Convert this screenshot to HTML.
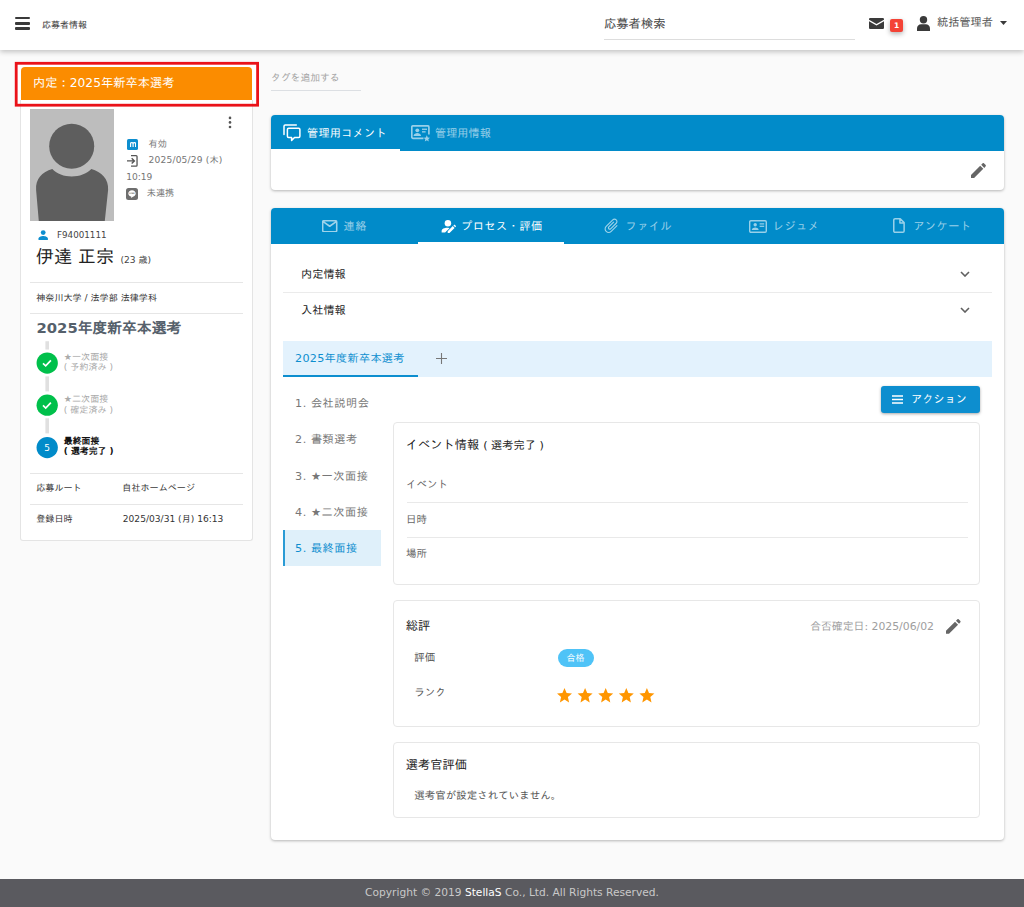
<!DOCTYPE html>
<html lang="ja">
<head>
<meta charset="utf-8">
<title>応募者情報</title>
<style>
*{box-sizing:border-box;margin:0;padding:0}
html,body{width:1024px;height:907px;overflow:hidden}
body{background:#fafafa;font-family:"DejaVu Sans","Liberation Sans","IPAGothic","Noto Sans CJK JP",sans-serif;color:#333;position:relative;font-size:11px}
.abs{position:absolute}
/* header */
#hdr{position:absolute;left:0;top:0;width:1024px;height:50px;background:#fff;box-shadow:0 2px 5px rgba(0,0,0,.22);z-index:5}
#hdr .ham{position:absolute;left:15px;top:17px;width:15px;height:13px}
#hdr .ham i{position:absolute;left:0;width:15px;height:2.4px;background:#3a3a3a;border-radius:1px}
#hdr .ttl{position:absolute;left:42px;top:18px;font-size:9px;line-height:14px;color:#333}
#hdr .srch{position:absolute;left:604px;top:15px;width:251px;height:25px;border-bottom:1px solid #ddd;font-size:12.3px;line-height:18px;color:#444}
#hdr .uname{position:absolute;left:937px;top:14px;font-size:11.2px;line-height:18px;color:#505050}
#hdr .badge{position:absolute;left:890px;top:19px;width:13px;height:13px;background:#f44336;border-radius:2px;color:#fff;font-size:7.5px;font-weight:bold;line-height:13px;text-align:center;box-shadow:0 2px 5px rgba(0,0,0,.3)}
/* left */
#redbox{position:absolute;left:14px;top:61px;width:246px;height:47px}
#redfill{position:absolute;left:16px;top:63px;width:242px;height:42px;background:#fff}
#offer{position:absolute;left:21px;top:66.5px;width:231px;height:33.5px;background:#fb8c00;border-radius:4px 4px 0 0;color:#fff;font-size:12.25px;line-height:33px;padding-left:12px}
#card{position:absolute;left:20px;top:100px;width:233px;height:441px;background:#fff;border:1px solid #e4e4e4;border-top:none;border-radius:0 0 3px 3px}
.hr{position:absolute;left:9px;width:213px;height:1px;background:#e6e6e6}

#card .t{position:absolute;font-size:9.1px;line-height:12px;color:#757575;white-space:nowrap}
#card .step{position:absolute;left:42.8px;font-size:9.1px;line-height:10.3px;color:#aaa;white-space:nowrap}
#card .step.cur{color:#111;font-weight:bold}
#card .circ{position:absolute;left:15.3px;width:21.4px;height:21.4px;border-radius:50%;background:#00c04b}
#card .conn{position:absolute;left:24.6px;width:3.6px;background:#e0e0e0}
/* right */
.panel{position:absolute;left:271px;width:733px;background:#fff;border-radius:4px;box-shadow:0 1px 3px rgba(0,0,0,.28)}
.bar{position:absolute;left:0;top:0;width:100%;height:36px;background:#018bc9;border-radius:4px 4px 0 0}

.tabs{position:absolute;left:0;top:0;width:100%;height:36px;display:flex}
.tab{height:36px;display:flex;align-items:center;justify-content:center;color:rgba(255,255,255,.6);font-size:11.2px;white-space:nowrap;position:relative}
.tab.on{color:#fff}
.tab.on:after{content:"";position:absolute;left:0;right:0;bottom:0;height:2px;background:#fff}
.tab svg{flex:none}
#p2 .tab{width:146.6px;letter-spacing:.5px}
.acc{position:absolute;left:30px;font-size:11.2px;line-height:16px;color:#222}
.side{position:absolute;left:12px;width:98px;height:36px;padding-left:12px;font-size:11.2px;line-height:36px;color:#777;letter-spacing:.55px;white-space:nowrap}
.side.on{background:#dff0fa;border-left:2px solid #2a9bd5;padding-left:10px;color:#0d8ecf;line-height:37.600px}
.box{position:absolute;left:122px;width:587px;border:1px solid #e7e7e7;border-radius:4px;background:#fff}
.box .h{position:absolute;left:11.800px;font-size:12.250px;line-height:18px;color:#222;white-space:nowrap}
.box .l{position:absolute;font-size:10.500px;line-height:16px;color:#666;white-space:nowrap}
.box .d{position:absolute;left:12.500px;width:561px;height:1px;background:#e9e9e9}
#footer{position:absolute;left:0;top:879px;width:1024px;height:28px;background:#5a5a5f;color:#c9c9c9;font-size:10.65px;line-height:27px;text-align:center}
#footer b{color:#fff;font-weight:normal}
</style>
</head>
<body>
<div id="hdr">
  <div class="ham"><i style="top:0"></i><i style="top:5.2px"></i><i style="top:10.4px"></i></div>
  <div class="ttl">応募者情報</div>
  <div class="srch">応募者検索</div>
  <svg class="abs" style="left:869px;top:18px" width="15" height="11" viewBox="0 0 15 12" preserveAspectRatio="none"><path d="M1.4 0h12.2c.8 0 1.4.6 1.4 1.4v.5L7.5 6.6 0 1.9v-.5C0 .6.6 0 1.4 0zM0 3.5l7.5 4.7L15 3.500v7.100c0 .8-.6 1.400-1.400 1.400H1.400C.6 12 0 11.400 0 10.600z" fill="#3a3a3a"/></svg>
  <div class="badge">1</div>
  <svg class="abs" style="left:917px;top:16px" width="13" height="15" viewBox="0 0 13 15"><circle cx="6.500" cy="3.700" r="3.700" fill="#3a3a3a"/><path d="M0 15v-2.400C0 10 1.800 8.300 4.200 8.300h4.600c2.400 0 4.200 1.700 4.200 4.300V15z" fill="#3a3a3a"/></svg>
  <div class="uname">統括管理者</div>
  <svg class="abs" style="left:1000px;top:21px" width="7" height="4" viewBox="0 0 7 4"><path d="M0 0h7L3.500 4z" fill="#3a3a3a"/></svg>
</div>

<div id="redfill"></div>
<div id="offer">内定：2025年新卒本選考</div>
<div id="card">
  <svg class="abs" style="left:9px;top:9px" width="84" height="112" viewBox="0 0 84 112"><rect width="84" height="112" fill="#bdbdbd"/><circle cx="41.700" cy="37.200" r="22.500" fill="#5e5e5e"/><path d="M8.800 112L6.100 81C5.300 70 12 63 22.300 60c4.700 5 11.700 7.400 19.400 7.400S56.500 65 61.300 60C71.500 63 78.900 70 78.100 81L74.800 112z" fill="#5e5e5e"/></svg>
  <svg class="abs" style="left:207px;top:16px" width="4" height="13" viewBox="0 0 4 13"><circle cx="2" cy="1.900" r="1.300" fill="#555"/><circle cx="2" cy="6.400" r="1.300" fill="#555"/><circle cx="2" cy="11" r="1.300" fill="#555"/></svg>
  <div class="abs" style="left:106.400px;top:39px;width:10.700px;height:10.600px;background:#0d8ecf;border-radius:1.600px"></div>
  <svg class="abs" style="left:108.550px;top:41.800px" width="6.400" height="5" viewBox="0 0 6.400 5"><path d="M.6 5V.5M.6 1.800C.6.900 1.100.55 1.850.55s1.250.35 1.250 1.250V5M3.100 1.800c0-.9.500-1.250 1.250-1.250s1.250.35 1.250 1.250V5" fill="none" stroke="#fff" stroke-width="1.150"/></svg>
  <div class="t" style="left:127.600px;top:37.600px">有効</div>
  <svg class="abs" style="left:106.400px;top:55px" width="10.700" height="11.800" viewBox="0 0 10.700 11.800"><path d="M4 .65h5.100c.6 0 .95.350.95.950v8.600c0 .6-.35.950-.95.950H4" fill="none" stroke="#555" stroke-width="1.300"/><path d="M0 5.900h7M4.700 3.200L7.400 5.900 4.700 8.600" fill="none" stroke="#555" stroke-width="1.400"/></svg>
  <div class="t" style="left:127.600px;top:54.300px;letter-spacing:.17px">2025/05/29 (木)</div>
  <div class="t" style="left:105.200px;top:70.800px">10:19</div>
  <div class="abs" style="left:105.100px;top:88px;width:11.900px;height:12px;background:#6e6e6e;border-radius:2.500px"></div>
  <svg class="abs" style="left:107px;top:90px" width="8" height="8.500" viewBox="0 0 8 8.500"><path d="M4 .3C1.900.3.300 1.700.3 3.500c0 1.500 1.200 2.700 2.900 3.100v1.500l1.700-1.400C6.600 6.300 7.700 5 7.700 3.500 7.700 1.700 6.100.3 4 .3z" fill="#fff"/><text x="4" y="4.400" font-size="2.200" font-weight="bold" text-anchor="middle" fill="#6e6e6e" font-family="DejaVu Sans, sans-serif">LINE</text></svg>
  <div class="t" style="left:125.800px;top:87.300px">未連携</div>

  <svg class="abs" style="left:17.200px;top:130px" width="10.400" height="10" viewBox="0 0 10 10"><circle cx="5" cy="2.600" r="2.400" fill="#0d8ecf"/><path d="M.3 10V8.600c0-1.700 3-2.600 4.700-2.600s4.700.9 4.700 2.600V10z" fill="#0d8ecf"/></svg>
  <div class="t" style="left:36px;top:129px;color:#444;font-size:8.750px">F94001111</div>
  <div class="abs" style="left:14.700px;top:142.500px;font-size:18.200px;line-height:28px;color:#222;white-space:nowrap">伊達 正宗 <span style="font-size:9.100px;color:#444;position:relative;top:.8px;left:.4px">(23 歳)</span></div>
  <div class="hr" style="top:182px"></div>
  <div class="t" style="left:15.200px;top:192px;color:#333">神奈川大学 / 法学部 法律学科</div>
  <div class="hr" style="top:213px"></div>
  <div class="abs" style="left:15.500px;top:217px;font-size:14.800px;font-weight:bold;line-height:22px;color:#55606b;white-space:nowrap">2025年度新卒本選考</div>

  <svg class="abs" style="left:13.500px;top:240px" width="26" height="120" viewBox="0 0 26 120"><g fill="#e0e0e0"><rect x="10.400" y="1.250" width="3.600" height="8.300"/><rect x="10.400" y="36.400" width="3.600" height="15"/><rect x="10.400" y="78.300" width="3.600" height="15.100"/></g><circle cx="12.200" cy="23.050" r="10.650" fill="#00c04b"/><circle cx="12.200" cy="65.200" r="10.650" fill="#00c04b"/><circle cx="12.200" cy="107.550" r="10.650" fill="#018bc9"/><g fill="none" stroke="#fff" stroke-width="1.700"><path d="M8 23.300l2.700 2.600 5.200-5.500"/><path d="M8 65.450l2.700 2.600 5.200-5.500"/></g><text x="12.200" y="110.800" font-size="9" fill="#fff" text-anchor="middle" font-family="DejaVu Sans, sans-serif">5</text></svg>
  <div class="step" style="top:252.200px">★一次面接<br>( 予約済み )</div>
  <div class="step" style="top:294.400px">★二次面接<br>( 確定済み )</div>
  <div class="step cur" style="top:337.200px;font-size:8.900px;line-height:9.900px">最終面接<br>( 選考完了 )</div>

  <div class="hr" style="top:373px"></div>
  <div class="t" style="left:15.200px;top:382.300px;color:#333">応募ルート</div>
  <div class="t" style="left:101.300px;top:382.300px;color:#333">自社ホームページ</div>
  <div class="hr" style="top:404px"></div>
  <div class="t" style="left:15.200px;top:412.700px;color:#333">登録日時</div>
  <div class="t" style="left:101.800px;top:412.700px;color:#333">2025/03/31 (月) 16:13</div>
</div>

<div class="abs" style="left:271px;top:68px;width:90px;height:23px;border-bottom:1px solid #dcdfe3;font-size:9.800px;line-height:16px;color:#a3a3a3;padding-top:1.900px;white-space:nowrap">タグを追加する</div>

<div class="panel" id="p1" style="top:115px;height:75px">
  <div class="bar"></div>
  <div class="tabs">
    <div class="tab on" style="width:128.700px;justify-content:flex-start;padding-left:12.300px;letter-spacing:.22px"><svg width="18" height="18" viewBox="0 0 18 18" style="margin-right:5.700px"><path d="M1 10.500V2.200C1 1.500 1.500 1 2.200 1H13.300" fill="none" stroke="#fff" stroke-width="1.500" stroke-linecap="round"/><path d="M5.600 4.300h10.100c.7 0 1.200.5 1.200 1.200v6.700c0 .7-.5 1.200-1.200 1.200h-4.200L8.600 16.400v-3H5.600c-.7 0-1.200-.5-1.200-1.200V5.500c0-.7.5-1.200 1.200-1.200z" fill="none" stroke="#fff" stroke-width="1.500" stroke-linejoin="round"/></svg>管理用コメント</div>
    <div class="tab" style="width:104px;justify-content:flex-start;padding-left:11.500px"><svg width="19" height="17" viewBox="0 0 19 17" style="margin-right:4.800px;position:relative;top:.9px"><g fill="none" stroke="rgba(255,255,255,.6)" stroke-width="1.650"><path d="M12.500 13.300H2c-.7 0-1.200-.5-1.200-1.200V2c0-.7.5-1.200 1.200-1.200h14.700c.7 0 1.200.5 1.200 1.200v7.500"/></g><g fill="rgba(255,255,255,.6)"><circle cx="6.300" cy="5.300" r="1.900"/><path d="M2.600 10.700c0-1.800 2.400-2.600 3.700-2.600s3.700.8 3.700 2.600v.4H2.600z"/><rect x="11" y="3.600" width="5" height="1.300"/><rect x="11" y="6.200" width="3.600" height="1.300"/><path d="M15.800 10.200l1 2.200 2.200.3-1.700 1.500.5 2.300-2-1.200-2 1.200.5-2.300-1.700-1.500 2.200-.3z"/></g></svg>管理用情報</div>
  </div>
  <svg class="abs" style="left:700px;top:48px" width="15" height="15" viewBox="0 0 15 15"><path d="M0 11.900V15h3.100l9.200-9.200-3.100-3.100zM14.700 3.300c.3-.3.300-.8 0-1.200L12.900.3c-.3-.3-.9-.3-1.200 0l-1.500 1.500 3.100 3.100z" fill="#666"/></svg>
</div>

<div class="panel" id="p2" style="top:208px;height:632px">
  <div class="bar"></div>
  <div class="tabs">
    <div class="tab"><svg width="15.400" height="12.500" viewBox="0 0 16 13" style="margin-right:6.400px;position:relative;left:.6px;top:-.2px"><path d="M1.900.8h12.200c.7 0 1.200.5 1.200 1.200v9c0 .7-.5 1.200-1.200 1.200H1.900c-.7 0-1.200-.5-1.200-1.200V2C.7 1.300 1.200.8 1.900.8zM1.200 1.700L8 6.500l6.800-4.800" fill="none" stroke="rgba(255,255,255,.62)" stroke-width="1.650" stroke-linejoin="round"/></svg>連絡</div>
    <div class="tab on"><svg width="15" height="13" viewBox="0 0 15 13" style="margin-right:7px;position:relative;left:1.800px"><circle cx="6.900" cy="3.300" r="3.250" fill="#fff"/><path d="M.6 12.400v-1.300C.6 8.900 3.600 7.800 6 7.800c.8 0 1.700.1 2.500.4L4.100 12.400z" fill="#fff"/><path d="M6.700 13v-1.800l5.100-5.100 1.800 1.800-5.100 5.100zM12.400 5.500l.7-.7c.2-.2.5-.2.700 0l1.100 1.100c.2.200.2.500 0 .7l-.7.7z" fill="#fff"/></svg>プロセス・評価</div>
    <div class="tab"><svg width="17.200" height="18.400" viewBox="1 .5 23 23.500" style="margin-right:5.500px;margin-top:.5px"><path transform="rotate(45 12.500 12)" d="M16.500 6v11.500c0 2.210-1.790 4-4 4s-4-1.790-4-4V5c0-1.380 1.120-2.500 2.500-2.500s2.500 1.120 2.500 2.500v10.500c0 .55-.45 1-1 1s-1-.45-1-1V6H10v9.500c0 1.380 1.120 2.500 2.500 2.500s2.500-1.120 2.500-2.500V5c0-2.210-1.790-4-4-4S7 2.790 7 5v12.500c0 3.040 2.460 5.500 5.500 5.500s5.500-2.460 5.500-5.500V6z" fill="rgba(255,255,255,.62)"/></svg>ファイル</div>
    <div class="tab"><svg width="18" height="13" viewBox="0 0 18 13" style="margin-right:6px"><rect x=".7" y=".7" width="16.600" height="11.600" rx="1.200" fill="none" stroke="rgba(255,255,255,.6)" stroke-width="1.400"/><g fill="rgba(255,255,255,.6)"><circle cx="6.200" cy="4.800" r="1.700"/><path d="M2.800 9.800c0-1.600 2.200-2.300 3.400-2.300s3.400.7 3.400 2.300v.3H2.800z"/><rect x="10.600" y="3.300" width="4.600" height="1.200"/><rect x="10.600" y="5.700" width="4.600" height="1.200"/></g></svg>レジュメ</div>
    <div class="tab" style="padding-left:3px"><svg width="11.900" height="15.100" viewBox="0 0 11 14" style="margin-right:8.500px"><path d="M1.900.7h4.800l3.600 3.600v7.800c0 .7-.5 1.200-1.200 1.200H1.900c-.7 0-1.200-.5-1.200-1.200V1.900C.7 1.200 1.200.7 1.900.7zM6.400.9v3.700h3.700" fill="none" stroke="rgba(255,255,255,.6)" stroke-width="1.400" stroke-linejoin="round"/></svg>アンケート</div>
  </div>

  <div class="acc" style="top:59.400px">内定情報</div>
  <svg class="abs" style="left:688.500px;top:63px" width="10" height="6" viewBox="0 0 10 6"><path d="M1 1l4 4 4-4" fill="none" stroke="#606060" stroke-width="1.600"/></svg>
  <div class="abs" style="left:12px;top:84px;width:709px;height:1px;background:#ebebeb"></div>
  <div class="acc" style="top:95.200px">入社情報</div>
  <svg class="abs" style="left:688.500px;top:99px" width="10" height="6" viewBox="0 0 10 6"><path d="M1 1l4 4 4-4" fill="none" stroke="#606060" stroke-width="1.600"/></svg>

  <div class="abs" style="left:12px;top:132.500px;width:709px;height:36px;background:#e3f2fd"></div>
  <div class="abs" style="left:12px;top:166.500px;width:134.500px;height:2px;background:#0d8ecf"></div>
  <div class="abs" style="left:24px;top:142.500px;font-size:11.200px;line-height:16px;color:#0d8ecf;letter-spacing:.27px;white-space:nowrap">2025年度新卒本選考</div>
  <svg class="abs" style="left:164.500px;top:145px" width="11" height="11" viewBox="0 0 11 11"><path d="M5.500 0v11M0 5.500h11" stroke="#777" stroke-width="1.100"/></svg>

  <div class="side" style="top:178.300px">1. 会社説明会</div>
  <div class="side" style="top:214.300px">2. 書類選考</div>
  <div class="side" style="top:250.900px">3. ★一次面接</div>
  <div class="side" style="top:286.900px">4. ★二次面接</div>
  <div class="side on" style="top:322.300px">5. 最終面接</div>

  <div class="abs" style="left:610px;top:178px;width:98.500px;height:26.500px;background:#0d8ecf;border-radius:3px;box-shadow:0 1px 3px rgba(0,0,0,.35)"></div>
  <svg class="abs" style="left:620.500px;top:186.500px" width="11" height="9" viewBox="0 0 11 9"><path d="M0 1h11M0 4.500h11M0 8h11" stroke="#fff" stroke-width="1.500"/></svg>
  <div class="abs" style="left:640px;top:184.300px;font-size:11.200px;line-height:16px;color:#fff;white-space:nowrap">アクション</div>

  <div class="box" style="top:214px;height:163px">
    <div class="h" style="top:12.500px">イベント情報 <span style="font-size:11.200px">( 選考完了 )</span></div>
    <div class="l" style="left:12px;top:53px">イベント</div>
    <div class="d" style="top:78.500px"></div>
    <div class="l" style="left:12px;top:87.600px">日時</div>
    <div class="d" style="top:114px"></div>
    <div class="l" style="left:12px;top:122.300px">場所</div>
  </div>

  <div class="box" style="top:392px;height:127px">
    <div class="h" style="top:15.600px">総評</div>
    <div class="l" style="right:45px;top:18.200px;color:#9e9e9e;font-size:10.850px">合否確定日: 2025/06/02</div>
    <svg class="abs" style="left:552.300px;top:18px" width="14.700" height="14.700" viewBox="0 0 15 15"><path d="M0 11.900V15h3.100l9.200-9.200-3.100-3.100zM14.700 3.300c.3-.3.300-.8 0-1.200L12.900.3c-.3-.3-.9-.3-1.200 0l-1.500 1.500 3.100 3.100z" fill="#666"/></svg>
    <div class="l" style="left:20.200px;top:47.500px;color:#555">評価</div>
    <div class="abs" style="left:163.500px;top:48.200px;width:36px;height:17.800px;border-radius:9px;background:#4fc3f7;color:#fff;font-size:9px;line-height:18.600px;text-align:center">合格</div>
    <div class="l" style="left:20.200px;top:83px;color:#555">ランク</div>
    <svg class="abs" style="left:163px;top:87px" width="100" height="15" viewBox="0 0 100 15"><g fill="#ff9600"><path id="st" d="M7.500 0l2.100 5 5.400.5-4.100 3.600 1.200 5.300-4.600-2.800-4.600 2.800 1.200-5.300L0 5.500 5.400 5z"/><use href="#st" x="20.600"/><use href="#st" x="41.200"/><use href="#st" x="61.800"/><use href="#st" x="82.400"/></g></svg>
  </div>

  <div class="box" style="top:534px;height:75.500px">
    <div class="h" style="top:12.500px">選考官評価</div>
    <div class="l" style="left:20.200px;top:43.800px;color:#555">選考官が設定されていません。</div>
  </div>
</div>

<svg id="redbox" viewBox="0 0 246 47"><rect x="2.200" y="2.300" width="241.400" height="41.900" fill="none" stroke="#ea1219" stroke-width="2.800"/></svg>
<div id="footer">Copyright © 2019 <b>StellaS</b> Co., Ltd. All Rights Reserved.</div>
</body>
</html>
